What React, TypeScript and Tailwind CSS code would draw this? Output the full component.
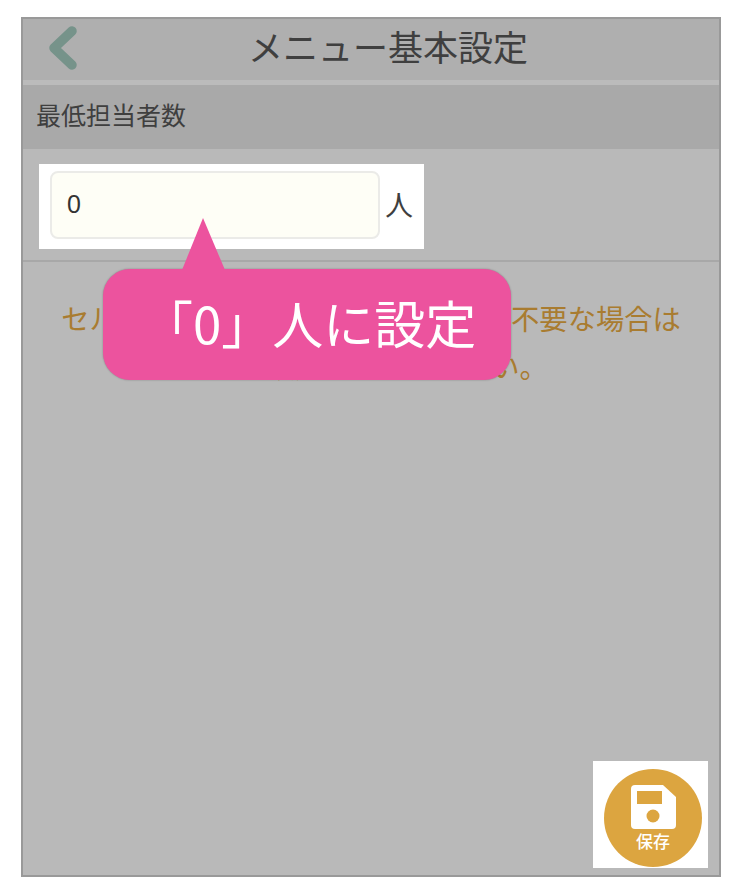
const jp = "font-['Noto_Sans_CJK_JP','Noto_Sans',sans-serif]";

function BackIcon() {
  return (
    <svg width="34" height="48" viewBox="0 0 34 48" className="block">
      <path d="M26 7 L8 24 L26 41" fill="none" stroke="#76938a" strokeWidth="9.5" strokeLinecap="round" strokeLinejoin="round" />
    </svg>
  );
}

function SaveIcon() {
  return (
    <svg width="45" height="44" viewBox="0 0 45 44" className="block">
      <path
        d="M4 0 H32 L45 12 V40 A4 4 0 0 1 41 44 H4 A4 4 0 0 1 0 40 V4 A4 4 0 0 1 4 0 Z"
        fill="#fff"
      />
      <rect x="6" y="6" width="25" height="13" fill="#dca540" />
      <circle cx="22" cy="31" r="6.5" fill="#dca540" />
    </svg>
  );
}

export default function App() {
  return (
    <div className={`relative w-[742px] h-[894px] bg-white pt-[17px] pl-[21px] ${jp}`}>
      <div className="w-[700px] h-[860px] border-2 border-[#999999] bg-[#b9b9b9] flex flex-col">
        {/* header */}
        <div className="relative h-[61px] bg-[#afafaf] flex items-center justify-center pb-[8px] shrink-0">
          <div className="absolute left-[23px] top-[5px]">
            <BackIcon />
          </div>
          <h1 className="text-[35px] leading-none text-[#3f3f3f] ml-[34px]">メニュー基本設定</h1>
        </div>
        <div className="h-[5px] bg-[#bbbbbb] shrink-0" />

        {/* section title */}
        <div className="h-[64px] bg-[#a9a9a9] flex items-center pl-[13px] pb-[6px] shrink-0">
          <span className="text-[25px] leading-none text-[#3f3f3f]">最低担当者数</span>
        </div>

        {/* input row */}
        <div className="h-[113px] border-b-2 border-[#a8a8a8] flex items-start pt-[15px] pl-[16px] shrink-0">
          <div className="w-[385px] h-[85px] bg-white flex items-start pt-[7px] pl-[11px]">
            <div className="w-[330px] h-[68px] bg-[#fefef6] border-2 border-[#ebebe8] rounded-[8px] flex items-center pl-[15px] pb-[2px]">
              <span className="text-[25px] leading-none text-[#333333] font-['Liberation_Sans',sans-serif]">0</span>
            </div>
            <span className="ml-[5px] mt-[19px] text-[28px] leading-none text-[#3f3f3f]">人</span>
          </div>
        </div>

        {/* note */}
        <div className="flex-1 flex flex-col relative">
          <p className="mt-[32px] text-center text-[28.3px] leading-[48px] text-[#a97c30]">
            セルフオーダーで、担当者の指名が不要な場合は
            <br />
            0人に設定にしてください。
          </p>

          <div className="mt-auto self-end mr-[11px] mb-[7px] w-[115px] h-[107px] bg-white flex items-start pl-[11px] pt-[8px]">
            <button className="w-[98px] h-[98px] rounded-full bg-[#dca540] flex flex-col items-center pt-[16px]">
              <SaveIcon />
              <span className="mt-[3px] text-[17px] leading-none font-medium text-white">保存</span>
            </button>
          </div>
        </div>
      </div>

      {/* callout */}
      <div className="absolute left-[103px] top-[218px] w-[408px]">
        <svg width="44" height="52" viewBox="0 0 44 52" className="block ml-[79px] mb-[-1px]">
          <path d="M21 0 L43 52 H0 Z" fill="#ec539e" />
        </svg>
        <div className="h-[111px] rounded-[27px] bg-[#ec539e] shadow-[0_0_2px_rgba(0,0,0,0.3)] flex items-center pl-[39px] pb-[4px]">
          <span className="text-[51px] leading-none font-normal text-white whitespace-nowrap">「0」人に設定</span>
        </div>
      </div>
    </div>
  );
}
